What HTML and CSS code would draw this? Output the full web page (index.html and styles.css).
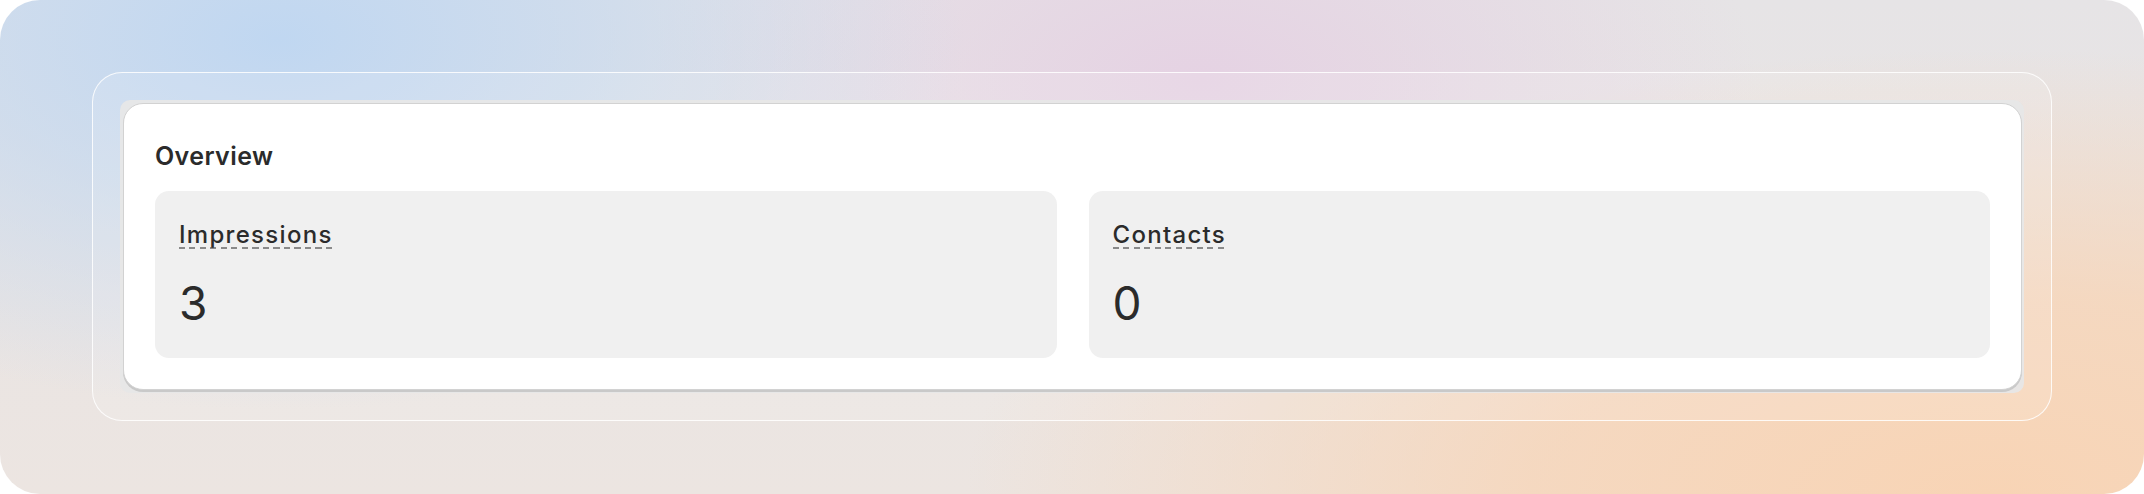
FILE: index.html
```html
<!DOCTYPE html>
<html lang="en">
<head>
<meta charset="utf-8">
<title>Overview</title>
<link rel="stylesheet" href="styles.css">
</head>
<body>
<div class="backdrop">
  <div class="frame">
    <div class="tray">
      <section class="panel">
        <h2 class="panel-title">Overview</h2>
        <div class="metrics">
          <div class="metric">
            <span class="metric-label">Impressions</span>
            <div class="metric-value">3</div>
          </div>
          <div class="metric">
            <span class="metric-label">Contacts</span>
            <div class="metric-value">0</div>
          </div>
        </div>
      </section>
    </div>
  </div>
</div>
</body>
</html>
```
FILE: styles.css
```css
* { box-sizing: border-box; }
html, body {
  margin: 0;
  padding: 0;
  background: #ffffff;
}
body {
  width: 2144px;
  height: 494px;
  font-family: Inter, "Noto Sans", sans-serif;
  color: #2b2b2b;
}
.backdrop {
  width: 2144px;
  height: 494px;
  border-radius: 40px;
  padding: 72px 92px 73px 92px;
  background:
    radial-gradient(ellipse 32% 75% at 13% 8%, rgba(192,215,241,1) 0%, rgba(192,215,241,0.6) 45%, rgba(192,215,241,0) 100%),
    radial-gradient(ellipse 26% 60% at 56% 16%, rgba(229,210,227,1) 0%, rgba(229,210,227,0) 100%),
    radial-gradient(ellipse 48% 90% at 93% 100%, rgba(248,212,181,1) 0%, rgba(248,212,181,0.75) 45%, rgba(248,212,181,0) 100%),
    linear-gradient(180deg, #e6e4e6 0%, #ece5e1 100%);
}
.frame {
  height: 100%;
  border: 1.5px solid rgba(255,255,255,0.85);
  border-radius: 30px;
  padding: 27px;
  background: rgba(255,255,255,0.12);
}
.tray {
  height: 100%;
  border-radius: 10px;
  background: rgba(231,231,231,0.95);
  padding: 3px 2px 3px 3px;
}
.panel {
  height: 100%;
  background: #ffffff;
  border-radius: 20px;
  border: 1px solid #d2d2d2;
  box-shadow: 0 2px 0 #c9c9c9;
  padding: 37px 31px 31px 31px;
}
.panel-title {
  margin: 0 0 20px 0;
  font-size: 25px;
  line-height: 30px;
  font-weight: 600;
  letter-spacing: 0.4px;
}
.metrics {
  display: grid;
  grid-template-columns: 1fr 1fr;
  gap: 32px;
}
.metric {
  height: 167px;
  background: #f0f0f0;
  border-radius: 14px;
  padding: 30px 24px 24px 24px;
}
.metric-label {
  display: inline-block;
  font-size: 24px;
  line-height: 27px;
  font-weight: 500;
  letter-spacing: 1.3px;
  padding-bottom: 1px;
  background-image: repeating-linear-gradient(90deg, #8a8a8a 0 6px, transparent 6px 10.5px);
  background-size: 100% 2px;
  background-repeat: no-repeat;
  background-position: left bottom;
}
.metric-value {
  margin-top: 28px;
  font-size: 46px;
  line-height: 53px;
  font-weight: 400;
}
```
